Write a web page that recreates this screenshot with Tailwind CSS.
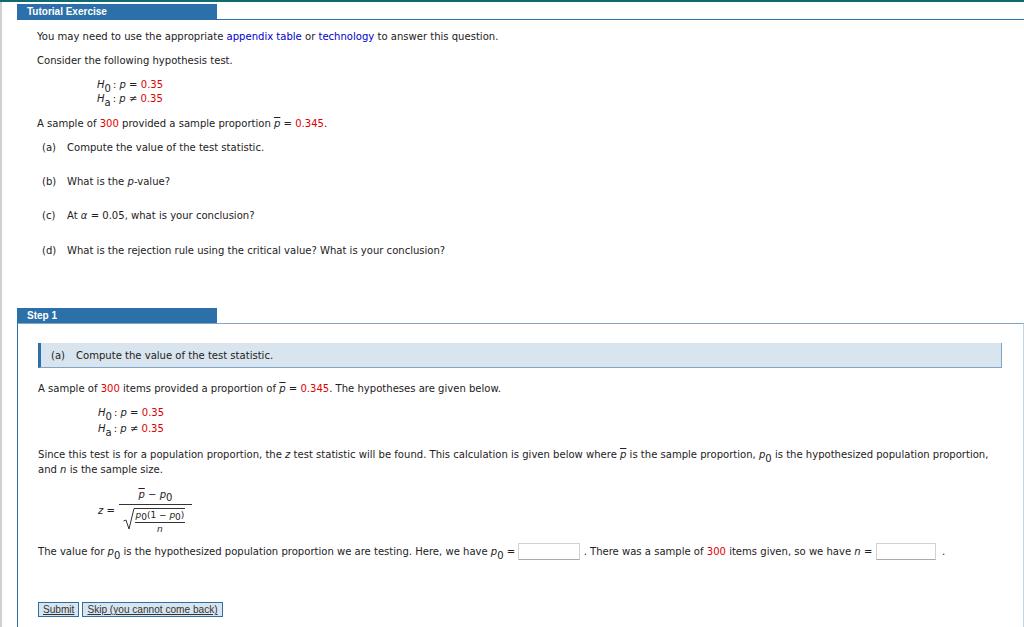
<!DOCTYPE html>
<html lang="en">
<head>
  <meta charset="UTF-8" />
  <title>Tutorial Exercise</title>
  <script src="https://cdn.jsdelivr.net/npm/@tailwindcss/browser@4"></script>
</head>
<body class="bg-white h-[627px] overflow-hidden font-['DejaVu_Sans',sans-serif] text-[10.05px] leading-[15px] text-[#222]">
  <div class="h-[2px] bg-[#0f6a6e]"></div>
  <div class="flex h-[625px]">
    <div class="w-[2px] bg-[#d0d0d0]"></div>
    <div class="flex-1 pl-[15px] min-w-0">

      <!-- tutorial header -->
      <div class="pt-[2px] border-b border-[#2b70a8]">
        <div class="w-[200px] h-[15px] bg-[#2b70a8] pl-[10px] font-['Liberation_Sans',sans-serif] font-bold text-[10px] leading-[15px] text-white">Tutorial Exercise</div>
      </div>

      <div class="pl-[20px]">
        <p class="mt-[9px]">You may need to use the appropriate <span class="text-[#0000cc]">appendix table</span> or <span class="text-[#0000cc]">technology</span> to answer this question.</p>
        <p class="mt-[9px]">Consider the following hypothesis test.</p>
        <div class="mt-[10px] pl-[60px] leading-[14px]">
          <div><i>H</i><sub class="text-[10px] leading-none -bottom-[4px] mr-[2px]">0</sub>: <i>p</i> = <span class="text-[#e00000]">0.35</span></div>
          <div><i>H</i><sub class="text-[10px] leading-none -bottom-[4px] mr-[2px]">a</sub>: <i>p</i> ≠ <span class="text-[#e00000]">0.35</span></div>
        </div>
        <p class="mt-[10px]">A sample of <span class="text-[#e00000]">300</span> provided a sample proportion <i class="overline">p</i> = <span class="text-[#e00000]">0.345</span>.</p>
        <div class="mt-[9px] flex flex-col gap-[19.2px] pl-[5px]">
          <div class="flex"><span class="w-[25px]">(a)</span><span>Compute the value of the test statistic.</span></div>
          <div class="flex"><span class="w-[25px]">(b)</span><span>What is the <i>p</i>-value?</span></div>
          <div class="flex"><span class="w-[25px]">(c)</span><span>At <i>α</i> = 0.05, what is your conclusion?</span></div>
          <div class="flex"><span class="w-[25px]">(d)</span><span>What is the rejection rule using the critical value? What is your conclusion?</span></div>
        </div>
      </div>

      <!-- step 1 -->
      <div class="mt-[50.8px] h-[15px] w-[200px] bg-[#2b70a8] pl-[10px] font-['Liberation_Sans',sans-serif] font-bold text-[10px] leading-[15px] text-white">Step 1</div>
      <div class="border-l border-t border-r border-l-[#2b70a8] border-t-[#7fa6c8] border-r-[#c4d6e4] h-[320px] pl-[20px] pr-[21px]">
        <div class="mt-[19px] h-[25px] bg-[#d9e5ee] border-l-[3px] border-l-[#2b70a8] border-b border-b-[#7fa6c8] border-r border-r-[#7fa6c8] flex items-center pl-[10px]">
          <span class="w-[25px]">(a)</span><span>Compute the value of the test statistic.</span>
        </div>
        <p class="mt-[13px]">A sample of <span class="text-[#e00000]">300</span> items provided a proportion of <i class="overline">p</i> = <span class="text-[#e00000]">0.345</span>. The hypotheses are given below.</p>
        <div class="mt-[8.5px] pl-[60px] leading-[16px]">
          <div><i>H</i><sub class="text-[10px] leading-none -bottom-[4px] mr-[2px]">0</sub>: <i>p</i> = <span class="text-[#e00000]">0.35</span></div>
          <div><i>H</i><sub class="text-[10px] leading-none -bottom-[4px] mr-[2px]">a</sub>: <i>p</i> ≠ <span class="text-[#e00000]">0.35</span></div>
        </div>
        <p class="mt-[10.5px]">Since this test is for a population proportion, the <i>z</i> test statistic will be found. This calculation is given below where <i class="overline">p</i> is the sample proportion, <i>p</i><sub class="text-[10px] leading-none -bottom-[4px]">0</sub> is the hypothesized population proportion, and <i>n</i> is the sample size.</p>

        <!-- formula -->
        <div class="mt-[9px] pl-[60px] flex items-center h-[48px]">
          <span class="mr-[4px]"><i>z</i> =</span>
          <div class="flex flex-col w-[73px]">
            <div class="h-[19px] leading-[18px] border-b border-[#333] w-full text-center"><i class="overline">p</i> − <i>p</i><sub class="text-[10px] leading-none -bottom-[3px]">0</sub></div>
            <div class="flex items-start h-[29px] pt-[3px] pl-[4px]">
              <svg width="12" height="22" viewBox="0 0 12 22" class="shrink-0"><path d="M0.5 13 L3 12 L6 21 L11 0.5 L12 0.5" fill="none" stroke="#333" stroke-width="1"/></svg>
              <div class="flex flex-col items-center w-[50px] text-[9px] leading-[12px] border-t border-[#333]">
                <div class="h-[14px] leading-[12px] border-b border-[#333] w-full text-center"><i>p</i><sub class="text-[9px] leading-none -bottom-[2px]">0</sub>(1 − <i>p</i><sub class="text-[9px] leading-none -bottom-[2px]">0</sub>)</div>
                <i>n</i>
              </div>
            </div>
          </div>
        </div>

        <div class="mt-[6px] flex items-center h-[22px] whitespace-pre">
          <span>The value for <i>p</i><sub class="text-[10px] leading-none -bottom-[4px]">0</sub> is the hypothesized population proportion we are testing. Here, we have <i>p</i><sub class="text-[10px] leading-none -bottom-[4px]">0</sub> = </span>
          <input type="text" class="w-[62px] h-[17px] bg-white border border-[#d2d2d2] border-b-[#aaa]" />
          <span> . There was a sample of <span class="text-[#e00000]">300</span> items given, so we have <i>n</i> = </span>
          <input type="text" class="w-[60px] h-[17px] bg-white border border-[#d2d2d2] border-b-[#aaa]" />
          <span>  .</span>
        </div>

        <div class="mt-[40px] flex gap-[3px] font-['Liberation_Sans',sans-serif] text-[10.1px]">
          <button class="h-[15px] px-[4px] leading-[13px] bg-[#d9e5ee] border border-[#2b70a8] underline text-[#333]">Submit</button>
          <button class="h-[15px] px-[4px] leading-[13px] bg-[#d9e5ee] border border-[#2b70a8] underline text-[#333]">Skip (you cannot come back)</button>
        </div>
      </div>
    </div>
  </div>
</body>
</html>
